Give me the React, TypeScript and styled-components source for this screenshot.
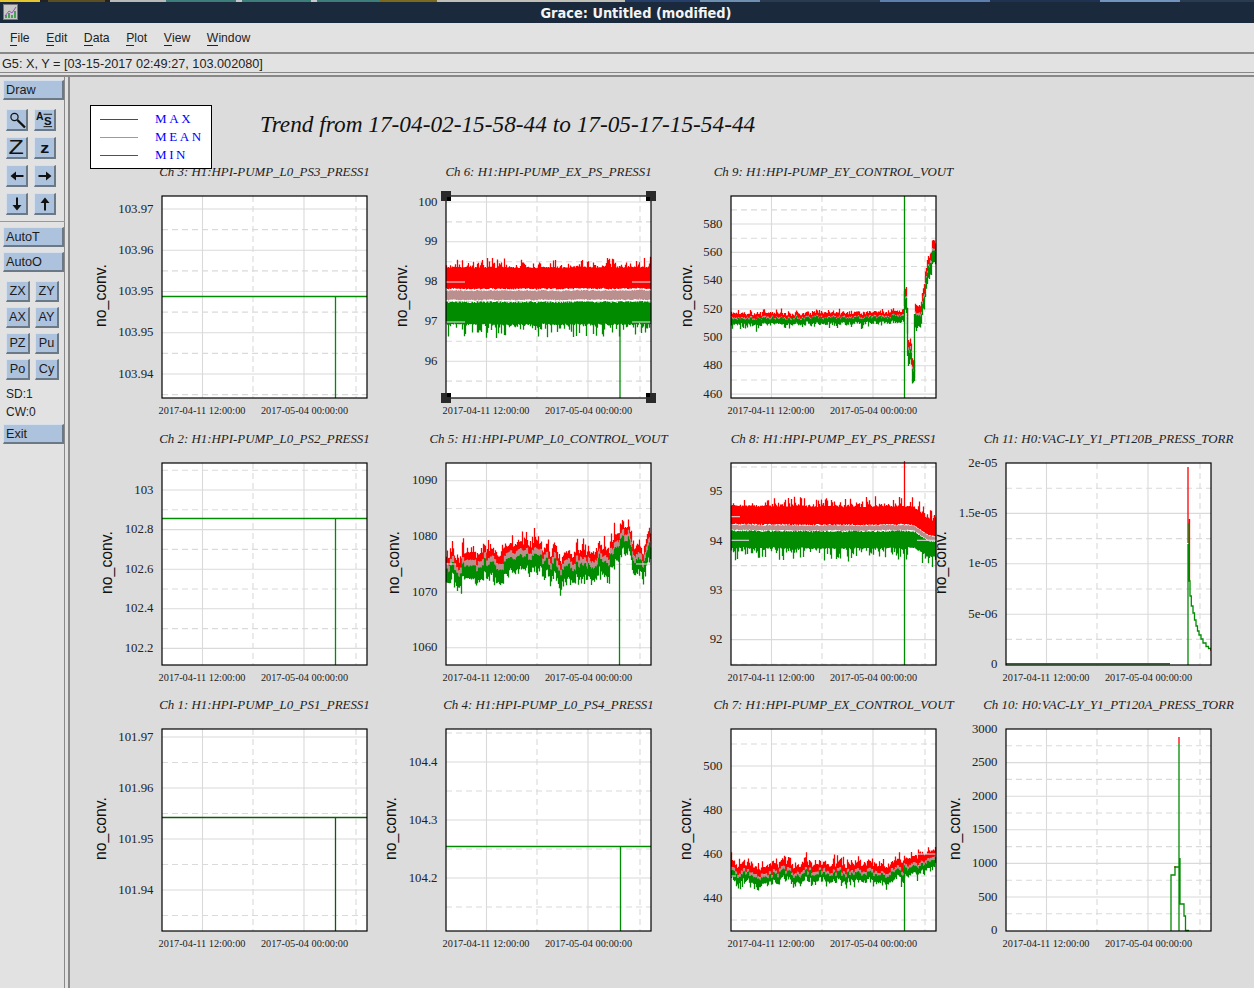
import React from "react";
import styled, { createGlobalStyle } from "styled-components";

const GlobalStyle = createGlobalStyle`
  html, body { margin: 0; padding: 0; background: #dcdcdc; }
  body { font-family: "Liberation Sans", Arial, sans-serif; }
`;

const Window = styled.div`
  width: 1254px;
  height: 988px;
  display: flex;
  flex-direction: column;
  overflow: hidden;
  background: #e2e2e2;
`;
const DesktopStrip = styled.div`
  height: 2px;
  flex: none;
  background: linear-gradient(90deg,
    #e6c62e 0 40px, #222 40px 48px, #5a4e22 48px 105px, #222 105px 110px,
    #b9b9b9 110px 166px, #3d7d7a 166px 236px, #c8c8c8 236px 242px, #3d7d7a 242px 311px,
    #c8c8c8 311px 317px, #3d7d7a 317px 380px, #7a6a20 380px 437px, #c0c0b8 437px 625px,
    #24406a 625px 700px, #6f8fb0 700px 760px, #2a3a50 760px 880px, #5c7fae 880px 990px,
    #1f3350 990px 1100px, #7394bd 1100px 1180px, #2a3a50 1180px);
`;
const TitleBar = styled.div`
  height: 21px;
  flex: none;
  position: relative;
  display: flex;
  align-items: center;
  justify-content: center;
  background: #1a2a3c;
  color: #f4f4f4;
  font-family: "DejaVu Sans Condensed", "DejaVu Sans", sans-serif;
  font-stretch: condensed;
  font-weight: 700;
  font-size: 14.4px;
  padding-left: 18px;
  box-sizing: border-box;
`;
const TitleIcon = styled.svg`
  position: absolute;
  left: 3px;
  top: 2px;
`;
const MenuBar = styled.div`
  height: 31px;
  flex: none;
  display: flex;
  align-items: center;
  gap: 16.6px;
  padding: 1px 0 0 10px;
  box-sizing: border-box;
  font-size: 12.2px;
  color: #222;
  border-bottom: 2px solid #888;
`;
const MenuItem = styled.span``;
const Mnemonic = styled.span`
  display: inline-block;
  border-bottom: 1px solid #222;
  line-height: 13px;
`;
const StatusBar = styled.div`
  height: 23px;
  flex: none;
  box-sizing: border-box;
  padding: 3px 0 0 2px;
  font-size: 12.7px;
  line-height: 14px;
  color: #222;
  background: #e2e2e2;
  border-bottom: 2px solid #888;
  box-shadow: inset 0 -2px 0 #e2e2e2, inset 0 -3px 0 #888;
`;
const Body = styled.div`
  flex: 1;
  display: flex;
  min-height: 0;
`;
const SidePanel = styled.div`
  width: 70px;
  flex: none;
  box-sizing: border-box;
  display: flex;
  flex-direction: column;
  padding: 3px 6px 0 0;
  background: #e2e2e2;
  border-right: 2px solid #888;
  box-shadow: inset -3px 0 0 #e2e2e2, inset -4px 0 0 #888;
`;
const bevel = `
  box-sizing: border-box;
  background: #adc2dc;
  border-style: solid;
  border-width: 1px 2px 2px 1px;
  border-color: #d5e0ec #6b7886 #6b7886 #d5e0ec;
  color: #1c1c1c;
  font-size: 12.7px;
`;
const WideButton = styled.div<{ $top: number }>`
  ${bevel}
  width: 61px;
  height: 20px;
  margin: ${(p) => p.$top}px 0 0 3px;
  padding-left: 2px;
  line-height: 18px;
`;
const IconGrid = styled.div`
  display: grid;
  grid-template-columns: 22px 22px;
  grid-auto-rows: 22px;
  gap: 6px;
  margin: 9px 0 0 6px;
`;
const IconButton = styled.div`
  ${bevel}
  display: flex;
  align-items: center;
  justify-content: center;
`;
const BigZ = styled.span`
  display: block;
  font-size: 20px;
  line-height: 19px;
  color: #111;
  transform: scaleX(1.25);
`;
const SmallZ = styled.span`
  display: block;
  font-size: 15px;
  font-weight: 700;
  line-height: 18px;
  color: #111;
  transform: scaleX(1.2);
`;
const Divider = styled.div`
  height: 1px;
  margin: 6px -3px 0 0;
  background: #999;
`;
const TextGrid = styled.div`
  display: grid;
  grid-template-columns: 24px 24px;
  grid-auto-rows: 21px;
  gap: 5px;
  margin: 9px 0 0 6px;
`;
const TextButton = styled.div`
  ${bevel}
  display: flex;
  align-items: center;
  justify-content: center;
  padding-bottom: 1px;
`;
const StateLabel = styled.div<{ $top?: number }>`
  margin: ${(p) => p.$top ?? 0}px 0 0 6px;
  height: 18px;
  line-height: 18px;
  font-size: 12px;
  color: #222;
`;
const Canvas = styled.div`
  flex: 1;
  min-width: 0;
  background: #dcdcdc;
  overflow: hidden;
`;
const Header = styled.div`
  height: 87px;
  box-sizing: border-box;
  padding: 28px 0 0 20px;
  display: flex;
  align-items: flex-start;
`;
const Legend = styled.div`
  position: relative;
  z-index: 1;
  width: 122px;
  height: 64px;
  flex: none;
  box-sizing: border-box;
  padding: 4px 0 0 9px;
  background: #fff;
  border: 1px solid #000;
`;
const LegendRow = styled.div`
  height: 18px;
  display: flex;
  align-items: center;
  gap: 17px;
`;
const LegendLine = styled.span<{ $color: string }>`
  display: block;
  width: 38px;
  height: 1px;
  background: ${(p) => p.$color};
`;
const LegendText = styled.span`
  font-family: "Liberation Serif", "Times New Roman", serif;
  font-size: 13px;
  letter-spacing: 2.6px;
  color: #0000ff;
`;
const MainTitle = styled.div`
  margin: 4px 0 0 48px;
  font-family: "Liberation Serif", "Times New Roman", serif;
  font-style: italic;
  font-size: 23.3px;
  line-height: 30px;
  color: #111;
  white-space: nowrap;
`;
const PlotGrid = styled.div`
  display: grid;
  grid-template-columns: 284px 285px 275px 205px;
  grid-template-rows: 267px 266px 266px;
  padding-left: 92px;
`;
const PlotCell = styled.div`
  width: 205px;
  display: flex;
  flex-direction: column;
  align-items: center;
`;
const PlotTitle = styled.div`
  height: 14px;
  margin: 1px 0 17px;
  font-family: "Liberation Serif", "Times New Roman", serif;
  font-style: italic;
  font-size: 12.9px;
  line-height: 14px;
  color: #222;
  white-space: nowrap;
`;
const PlotSvg = styled.svg`
  display: block;
  flex: none;
  overflow: visible;
`;
const TickLabel = styled.text`
  font-family: "Liberation Serif", "Times New Roman", serif;
  font-size: 12.8px;
  fill: #222;
  text-anchor: end;
`;
const DateLabel = styled.text`
  font-family: "Liberation Serif", "Times New Roman", serif;
  font-size: 10.3px;
  fill: #222;
  text-anchor: middle;
`;
const AxisLabel = styled.text`
  font-family: "Liberation Sans", Arial, sans-serif;
  font-size: 15.8px;
  fill: #111;
  text-anchor: middle;
`;

/* ---------- data ---------- */
const RED = "#ff0000";
const ROSY = "#bc8f8f";
const GREEN = "#008b00";
const W = 205;
const H = 202;

const rng = (seed: number) => () => {
  seed |= 0;
  seed = (seed + 0x6d2b79f5) | 0;
  let t = Math.imul(seed ^ (seed >>> 15), 1 | seed);
  t = (t + Math.imul(t ^ (t >>> 7), 61 | t)) ^ t;
  return ((t ^ (t >>> 14)) >>> 0) / 4294967296;
};
const interp = (k: number[][], x: number) => {
  if (x <= k[0][0]) return k[0][1];
  for (let i = 1; i < k.length; i++) {
    if (x <= k[i][0]) {
      const [a, b] = k[i - 1];
      const [c, d] = k[i];
      return b + ((d - b) * (x - a)) / (c - a || 1);
    }
  }
  return k[k.length - 1][1];
};

type Trace = { color: string; d: string; width?: number };
type BandSpec = {
  seed: number;
  center: number[][];
  gain?: number[][];
  red: [number, number];
  mean: [number, number];
  green: [number, number];
  spike: [number, number];
  wander: number;
  fast: number;
  step?: number;
};

const bands = (s: BandSpec): Trace[] => {
  const r = rng(s.seed);
  let walk = 0;
  let red = "";
  let mean = "";
  let green = "";
  const step = s.step ?? 1;
  let slow = 0;
  for (let x = 0; x < W; x++) {
    if (x % step === 0) {
      walk = walk * 0.55 + (r() - 0.5) * s.fast;
      slow = slow * 0.94 + (r() - 0.5) * s.wander;
    }
    const g = s.gain ? interp(s.gain, x) : 1;
    const c = interp(s.center, x) + (walk + slow) * g;
    const hi = Math.pow(r(), 4) * s.spike[0];
    const lo = Math.pow(r(), 4) * s.spike[1];
    const px = x + 0.5;
    const rt = c + s.red[0] * g - hi - r() * 2.5 * Math.min(1, s.wander + 0.4);
    const gb = c + s.green[1] * g + lo + r() * 2.5 * Math.min(1, s.wander + 0.4);
    red += `M${px} ${rt.toFixed(1)}V${(c + s.red[1] * g + r() * 1.2).toFixed(1)}`;
    mean += `M${px} ${(c + s.mean[0] * g + (r() - 0.5)).toFixed(1)}V${(c + s.mean[1] * g + (r() - 0.5)).toFixed(1)}`;
    green += `M${px} ${(c + s.green[0] * g + (r() - 0.5) * 1.5).toFixed(1)}V${gb.toFixed(1)}`;
  }
  return [
    { color: RED, d: red },
    { color: ROSY, d: mean },
    { color: GREEN, d: green },
  ];
};

const flat = (y: number, x: number, color = GREEN): Trace[] => [
  { color, d: `M0 ${y + 0.5}H${W}M${x + 0.5} ${y}V${H}` },
];

type PlotSpec = {
  channel: string;
  first: number;
  pitch: number;
  labels: string[];
  axisX: number | null;
  traces: Trace[];
  patches?: number[][];
  selected?: boolean;
};

const plots: (PlotSpec | null)[] = [
  {
    channel: "Ch 3: H1:HPI-PUMP_L0_PS3_PRESS1",
    first: 13,
    pitch: 41.25,
    labels: ["103.97", "103.96", "103.95", "103.95", "103.94"],
    axisX: -61,
    traces: flat(100, 173),
  },
  {
    channel: "Ch 6: H1:HPI-PUMP_EX_PS_PRESS1",
    first: 6,
    pitch: 39.8,
    labels: ["100", "99", "98", "97", "96"],
    axisX: -44,
    selected: true,
    traces: [
      ...bands({
        seed: 6,
        center: [[0, 98], [W, 98]],
        red: [-26, -6],
        mean: [-3.5, 5.7],
        green: [8, 29.5],
        spike: [10, 14],
        wander: 0.15,
        fast: 0.5,
      }),
      { color: GREEN, d: "M174 120V202" },
    ],
    patches: [[0, 19, 86], [186, 205, 86], [0, 19, 126], [186, 205, 126]],
  },
  {
    channel: "Ch 9: H1:HPI-PUMP_EY_CONTROL_VOUT",
    first: 28,
    pitch: 28.35,
    labels: ["580", "560", "540", "520", "500", "480", "460"],
    axisX: -44,
    traces: [
      ...bands({
        seed: 9,
        center: [[0, 122], [100, 122], [150, 121], [172, 120], [173, 105], [175, 105], [176, 125], [177, 152], [180, 156], [181, 172], [183, 176], [183.5, 122], [190, 118], [191, 108], [193, 100], [195, 84], [197, 70], [200, 68], [201, 56], [205, 56]],
        gain: [[0, 1], [172, 1], [174, 2.2], [205, 2.2]],
        red: [-4, -1],
        mean: [-1, 1],
        green: [0, 4.5],
        spike: [3, 6],
        wander: 0.3,
        fast: 3.5,
      }),
      { color: GREEN, d: "M173.5 0V202M176.5 112V160M183.5 118V182" },
    ],
  },
  null,
  {
    channel: "Ch 2: H1:HPI-PUMP_L0_PS2_PRESS1",
    first: 27,
    pitch: 39.6,
    labels: ["103", "102.8", "102.6", "102.4", "102.2"],
    axisX: -55,
    traces: flat(55, 173),
  },
  {
    channel: "Ch 5: H1:HPI-PUMP_L0_CONTROL_VOUT",
    first: 17.7,
    pitch: 55.7,
    labels: ["1090", "1080", "1070", "1060"],
    axisX: -52,
    traces: [
      ...bands({
        seed: 5,
        center: [[0, 100], [140, 100], [148, 111], [154, 95], [166, 90], [174, 78], [182, 72], [187, 90], [197, 102], [204, 86]],
        red: [-9, -1],
        mean: [-3, 5],
        green: [3, 14],
        spike: [14, 9],
        wander: 0.4,
        fast: 15,
        step: 2,
      }),
      { color: GREEN, d: "M173.5 90V202" },
    ],
    patches: [[0, 10, 101], [190, 205, 101]],
  },
  {
    channel: "Ch 8: H1:HPI-PUMP_EY_PS_PRESS1",
    first: 28.7,
    pitch: 49.3,
    labels: ["95", "94", "93", "92"],
    axisX: null,
    traces: [
      ...bands({
        seed: 8,
        center: [[0, 64.5], [100, 65], [172, 64.5], [182, 65], [197, 75], [205, 76]],
        gain: [[0, 1], [172, 1], [205, 0.85]],
        red: [-21, -4],
        mean: [-2.5, 2.5],
        green: [3.5, 19.5],
        spike: [10, 13],
        wander: 0.1,
        fast: 0.5,
      }),
      { color: RED, d: "M173.5 -2V50" },
      { color: GREEN, d: "M173.5 70V202" },
    ],
    patches: [[0, 18, 77.3], [186, 205, 77.3], [0, 9, 53.7]],
  },
  {
    channel: "Ch 11: H0:VAC-LY_Y1_PT120B_PRESS_TORR",
    first: 0,
    pitch: 50.4,
    labels: ["2e-05", "1.5e-05", "1e-05", "5e-06", "0"],
    axisX: -65,
    traces: [
      { color: RED, d: "M182 4V80M183.5 56V118M205 187H204" },
      { color: GREEN, width: 1.6, d: "M0 200.8H164" },
      { color: GREEN, d: "M182 81V202M183 60V118H184V133H185.3V143H187V150H188.5V157H190V163H191.5V168H193V172H195V176H197V180H200V183.5H202.5V185.5H205" },
    ],
  },
  {
    channel: "Ch 1: H1:HPI-PUMP_L0_PS1_PRESS1",
    first: 8,
    pitch: 51,
    labels: ["101.97", "101.96", "101.95", "101.94"],
    axisX: -61,
    traces: flat(88, 173, "#0c5c0c"),
  },
  {
    channel: "Ch 4: H1:HPI-PUMP_L0_PS4_PRESS1",
    first: 33,
    pitch: 58,
    labels: ["104.4", "104.3", "104.2"],
    axisX: -55,
    traces: flat(117, 174),
  },
  {
    channel: "Ch 7: H1:HPI-PUMP_EX_CONTROL_VOUT",
    first: 37,
    pitch: 44,
    labels: ["500", "480", "460", "440"],
    axisX: -45,
    traces: [
      ...bands({
        seed: 7,
        center: [[0, 144], [172, 144], [173, 134], [185, 133], [205, 131]],
        red: [-8, -2],
        mean: [-2, 3],
        green: [1, 7],
        spike: [9, 6],
        wander: 0.1,
        fast: 8,
        step: 2,
      }),
      { color: GREEN, d: "M173.5 140V202" },
    ],
    patches: [[0, 5, 147], [186, 205, 125]],
  },
  {
    channel: "Ch 10: H0:VAC-LY_Y1_PT120A_PRESS_TORR",
    first: 0,
    pitch: 33.6,
    labels: ["3000", "2500", "2000", "1500", "1000", "500", "0"],
    axisX: -51,
    traces: [
      { color: RED, d: "M173 8V14M169 137V139" },
      { color: GREEN, d: "M165 202V146H169V138H173V14M173 14V202M174 129V175H178V187H179.5V201.5H183" },
    ],
  },
];

const gridX = [40.5, 91, 142, 194];
const dateLabels: [number, string][] = [
  [40, "2017-04-11 12:00:00"],
  [142.5, "2017-05-04 00:00:00"],
];

const Handle = ({ x, y }: { x: number; y: number }) => {
  const sx = x === 0 ? 1 : -1;
  const sy = y === 0 ? 1 : -1;
  return (
    <g>
      <rect x={x - 5} y={y - 5} width={10} height={10} fill="#2a2a2a" />
      <rect x={sx > 0 ? x + 1 : x - 5} y={sy > 0 ? y + 1 : y - 5} width={4} height={4} fill="#000" />
    </g>
  );
};

const Plot = ({ spec }: { spec: PlotSpec }) => {
  const majors = spec.labels.map((_, i) => spec.first + i * spec.pitch);
  const minors: number[] = [];
  for (let y = spec.first - spec.pitch / 2; y < H; y += spec.pitch) {
    if (y > 1) minors.push(y);
  }
  return (
    <PlotCell>
      <PlotTitle>{spec.channel}</PlotTitle>
      <PlotSvg width={W} height={H} viewBox={`0 0 ${W} ${H}`}>
        <rect x={0} y={0} width={W} height={H} fill="#fff" />
        <g stroke="#dadada" strokeWidth={1.1} fill="none">
          {majors.map((y) => (y > 0.5 && y < H - 0.5 ? <path key={y} d={`M0 ${y}H${W}`} /> : null))}
          {minors.map((y) => (
            <path key={y} d={`M0 ${y}H${W}`} strokeDasharray="6 4" />
          ))}
          <path d={`M${gridX[0]} 0V${H}M${gridX[2]} 0V${H}`} />
          <path d={`M${gridX[1]} 0V${H}M${gridX[3]} 0V${H}`} strokeDasharray="6 4" />
        </g>
        {spec.traces.map((t, i) => (
          <path key={i} d={t.d} stroke={t.color} strokeWidth={t.width ?? 1.3} fill="none" />
        ))}
        {spec.patches?.map(([a, b, y]) => (
          <path key={`${a}-${y}`} d={`M${a} ${y}H${b}`} stroke="#dcdcdc" strokeWidth={1.1} />
        ))}
        <rect x={0} y={0} width={W} height={H} fill="none" stroke="#000" strokeWidth={1.2} />
        {spec.labels.map((l, i) => (
          <TickLabel key={i} x={-8.5} y={majors[i] + 3.5}>
            {l}
          </TickLabel>
        ))}
        {dateLabels.map(([x, l]) => (
          <DateLabel key={l} x={x} y={H + 15.5}>
            {l}
          </DateLabel>
        ))}
        {spec.axisX !== null && (
          <AxisLabel transform={`translate(${spec.axisX + 5} 99.5) rotate(-90)`}>no_conv.</AxisLabel>
        )}
        {spec.selected && (
          <g>
            <Handle x={0} y={0} />
            <Handle x={W} y={0} />
            <Handle x={0} y={H} />
            <Handle x={W} y={H} />
          </g>
        )}
      </PlotSvg>
    </PlotCell>
  );
};

/* ---------- toolbar icons ---------- */
const Magnifier = () => (
  <svg width="18" height="18" viewBox="0 0 18 18">
    <circle cx="6.5" cy="6" r="3.6" fill="none" stroke="#111" strokeWidth="1.2" />
    <path d="M9.4 9L17 16.5" stroke="#111" strokeWidth="2.4" />
  </svg>
);
const AutoScale = () => (
  <svg width="20" height="19" viewBox="0 0 20 19">
    <text x="1" y="10" fontFamily="Liberation Sans" fontWeight="700" fontSize="11" fill="#111">A</text>
    <text x="9.5" y="15" fontFamily="Liberation Sans" fontWeight="700" fontSize="12" fill="#111">S</text>
    <path d="M9 4H18M9 17H18" stroke="#111" strokeWidth="1" />
  </svg>
);
const Arrow = ({ dir }: { dir: "left" | "right" | "up" | "down" }) => {
  const rot = { right: 0, down: 90, left: 180, up: 270 }[dir];
  return (
    <svg width="16" height="16" viewBox="0 0 16 16">
      <path transform={`rotate(${rot} 8 8)`} d="M1.5 7H9V3.5L14.5 8L9 12.5V9H1.5Z" fill="#111" />
    </svg>
  );
};

const Menu = ({ label }: { label: string }) => (
  <MenuItem>
    <Mnemonic>{label[0]}</Mnemonic>
    {label.slice(1)}
  </MenuItem>
);

export default function App() {
  return (
    <Window>
      <GlobalStyle />
      <DesktopStrip />
      <TitleBar>
        <TitleIcon width="15" height="16" viewBox="0 0 15 16">
          <rect x="0.5" y="0.5" width="14" height="15" fill="#c8c8c8" stroke="#777" />
          <path d="M2 12L6 7L9 9L13 3" stroke="#a050c0" fill="none" />
          <path d="M3 14V11M6 14V9M9 14V11M12 14V7" stroke="#2a9a3a" strokeWidth="1.6" />
        </TitleIcon>
        Grace: Untitled (modified)
      </TitleBar>
      <MenuBar>
        {["File", "Edit", "Data", "Plot", "View", "Window"].map((m) => (
          <Menu key={m} label={m} />
        ))}
      </MenuBar>
      <StatusBar>G5: X, Y = [03-15-2017 02:49:27, 103.002080]</StatusBar>
      <Body>
        <SidePanel>
          <WideButton $top={0}>Draw</WideButton>
          <IconGrid>
            <IconButton><Magnifier /></IconButton>
            <IconButton><AutoScale /></IconButton>
            <IconButton><BigZ>Z</BigZ></IconButton>
            <IconButton><SmallZ>z</SmallZ></IconButton>
            <IconButton><Arrow dir="left" /></IconButton>
            <IconButton><Arrow dir="right" /></IconButton>
            <IconButton><Arrow dir="down" /></IconButton>
            <IconButton><Arrow dir="up" /></IconButton>
          </IconGrid>
          <Divider />
          <WideButton $top={5}>AutoT</WideButton>
          <WideButton $top={5}>AutoO</WideButton>
          <TextGrid>
            {["ZX", "ZY", "AX", "AY", "PZ", "Pu", "Po", "Cy"].map((b) => (
              <TextButton key={b}>{b}</TextButton>
            ))}
          </TextGrid>
          <StateLabel $top={5}>SD:1</StateLabel>
          <StateLabel>CW:0</StateLabel>
          <WideButton $top={3}>Exit</WideButton>
        </SidePanel>
        <Canvas>
          <Header>
            <Legend>
              <LegendRow>
                <LegendLine $color={RED} />
                <LegendText>MAX</LegendText>
              </LegendRow>
              <LegendRow>
                <LegendLine $color={ROSY} />
                <LegendText>MEAN</LegendText>
              </LegendRow>
              <LegendRow>
                <LegendLine $color={GREEN} />
                <LegendText>MIN</LegendText>
              </LegendRow>
            </Legend>
            <MainTitle>Trend from 17-04-02-15-58-44 to 17-05-17-15-54-44</MainTitle>
          </Header>
          <PlotGrid>
            {plots.map((p, i) => (p ? <Plot key={p.channel} spec={p} /> : <div key={i} />))}
          </PlotGrid>
        </Canvas>
      </Body>
    </Window>
  );
}
